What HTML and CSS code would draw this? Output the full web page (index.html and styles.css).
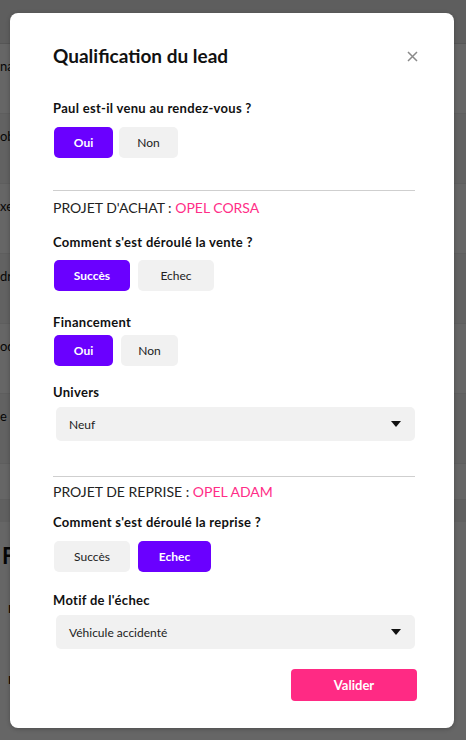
FILE: index.html
```html
<!DOCTYPE html>
<html lang="fr">
<head>
<meta charset="utf-8">
<title>Qualification du lead</title>
<link rel="stylesheet" href="styles.css">
</head>
<body>
<div class="page">
  <div class="page-head"></div>
  <div class="row"><span class="cell">na</span></div>
  <div class="row alt"><span class="cell">ob</span></div>
  <div class="row"><span class="cell">xe</span></div>
  <div class="row alt"><span class="cell">dr</span></div>
  <div class="row"><span class="cell">od</span></div>
  <div class="row alt"><span class="cell">e</span></div>
  <div class="row short"></div>
  <div class="page-band"></div>
  <div class="page-section">
    <div class="big">F</div>
    <div class="mark">I</div>
    <div class="mark second">I</div>
  </div>
</div>
<div class="overlay"></div>
<div class="modal">
  <div class="modal-head">
    <h1 class="title">Qualification du lead</h1>
    <span class="close">
      <svg width="11" height="11" viewBox="0 0 11 11"><path d="M1 1 L10 10 M10 1 L1 10" stroke="#8a8a8a" stroke-width="1.5" fill="none"/></svg>
    </span>
  </div>

  <div class="label q1">Paul est-il venu au rendez-vous ?</div>
  <div class="btns g6">
    <button class="btn on w59">Oui</button>
    <button class="btn w59">Non</button>
  </div>

  <div class="divider d1"></div>
  <div class="section">PROJET D'ACHAT : <span class="pink">OPEL CORSA</span></div>

  <div class="label l-vente">Comment s'est déroulé la vente ?</div>
  <div class="btns g8 b-vente">
    <button class="btn on w76">Succès</button>
    <button class="btn w76">Echec</button>
  </div>

  <div class="label l-fin">Financement</div>
  <div class="btns g8 b-fin">
    <button class="btn on w59">Oui</button>
    <button class="btn w57">Non</button>
  </div>

  <div class="label l-univ">Univers</div>
  <div class="select s-univ"><span>Neuf</span><span class="caret"></span></div>

  <div class="divider d2"></div>
  <div class="section s2">PROJET DE REPRISE : <span class="pink">OPEL ADAM</span></div>

  <div class="label l-rep">Comment s'est déroulé la reprise ?</div>
  <div class="btns g8 b-rep">
    <button class="btn w76">Succès</button>
    <button class="btn on w73">Echec</button>
  </div>

  <div class="label l-motif">Motif de l'échec</div>
  <div class="select s-motif"><span>Véhicule accidenté</span><span class="caret"></span></div>

  <div class="footer">
    <button class="valider">Valider</button>
  </div>
</div>
</body>
</html>
```

FILE: styles.css
```css
* { box-sizing: border-box; }
html, body { margin: 0; padding: 0; }
body {
  width: 466px;
  height: 740px;
  overflow: hidden;
  font-family: Lato, "Noto Sans", "Liberation Sans", sans-serif;
  background: #ffffff;
  position: relative;
}

/* background page */
.page { display: flex; flex-direction: column; }
.page-head { height: 44px; background: #ececec; border-bottom: 1px solid #d8d8d8; }
.row {
  height: 70px;
  display: flex;
  align-items: flex-start;
  padding-top: 14px;
  background: #ffffff;
  border-bottom: 1px solid #ebebeb;
  font-size: 13px;
  line-height: 16px;
  color: #111;
}
.row.alt { background: #f6f6f6; }
.row.short { height: 36px; }
.cell { margin-left: 0; }
.page-band { height: 22px; background: #f0f0f0; }
.page-section { padding-left: 2px; padding-top: 20px; }
.big { font-size: 22px; font-weight: 700; color: #111; }
.mark { font-size: 12px; font-weight: 700; color: #3a1a00; margin-top: 32px; padding-left: 6px; }
.mark.second { margin-top: 56px; }

.overlay {
  position: absolute;
  inset: 0;
  background: rgba(0, 0, 0, 0.6);
}

/* modal */
.modal {
  position: absolute;
  left: 10px;
  top: 13px;
  width: 444px;
  height: 715px;
  background: #fff;
  border-radius: 8px;
  box-shadow: 0 1px 4px rgba(0,0,0,0.25);
  padding: 31px 38px 0 43px;
  display: flex;
  flex-direction: column;
  color: #111;
}
.modal-head {
  display: flex;
  justify-content: space-between;
  align-items: center;
  height: 24px;
}
.title {
  margin: 0;
  font-size: 19px;
  font-weight: 700;
  line-height: 24px;
  color: #111;
}
.close { display: flex; margin-right: -2px; }

.label {
  font-size: 13px;
  font-weight: 700;
  line-height: 16px;
  letter-spacing: 0.3px;
  color: #111;
}
.q1 { margin-top: 32px; }
.btns { display: flex; margin-top: 11px; margin-left: 1px; }
.g6 { gap: 6px; }
.g8 { gap: 8px; }
.btn {
  height: 31px;
  border: none;
  border-radius: 5px;
  background: #f1f1f1;
  color: #222;
  font-family: inherit;
  font-size: 12px;
  padding: 0;
  cursor: pointer;
}
.btn.on { background: #6a00ff; color: #fff; font-weight: 700; }
.w57 { width: 57px; }
.w59 { width: 59px; }
.w73 { width: 73px; }
.w76 { width: 76px; }

.divider { height: 1px; background: #cfcfcf; width: 362px; }
.d1 { margin-top: 32px; }
.d2 { margin-top: 35px; }

.section {
  margin-top: 8px;
  font-size: 14px;
  line-height: 18px;
  color: #222;
  font-weight: 400;
}
.section.s2 { margin-top: 6px; }
.pink { color: #ff2d87; }

.l-vente { margin-top: 17px; }
.b-vente { margin-top: 10px; }
.l-fin { margin-top: 23px; }
.b-fin { margin-top: 5px; }
.l-univ { margin-top: 18px; }
.l-rep { margin-top: 13px; }
.b-rep { margin-top: 11px; }
.l-motif { margin-top: 20px; }

.select {
  margin-top: 7px;
  margin-left: 3px;
  width: 359px;
  height: 34px;
  background: #f1f1f1;
  border-radius: 5px;
  display: flex;
  align-items: center;
  justify-content: space-between;
  padding: 0 14px 0 13px;
  font-size: 12px;
  color: #222;
}
.caret {
  width: 0;
  height: 0;
  border-left: 5px solid transparent;
  border-right: 5px solid transparent;
  border-top: 6px solid #111;
}

.footer {
  display: flex;
  justify-content: flex-end;
  margin-top: 20px;
  padding-right: 1px;
  margin-right: -2px;
}
.valider {
  width: 126px;
  height: 32px;
  border: none;
  border-radius: 4px;
  background: #ff2a84;
  color: #fff;
  font-family: inherit;
  font-size: 13px;
  font-weight: 700;
  cursor: pointer;
}
```
